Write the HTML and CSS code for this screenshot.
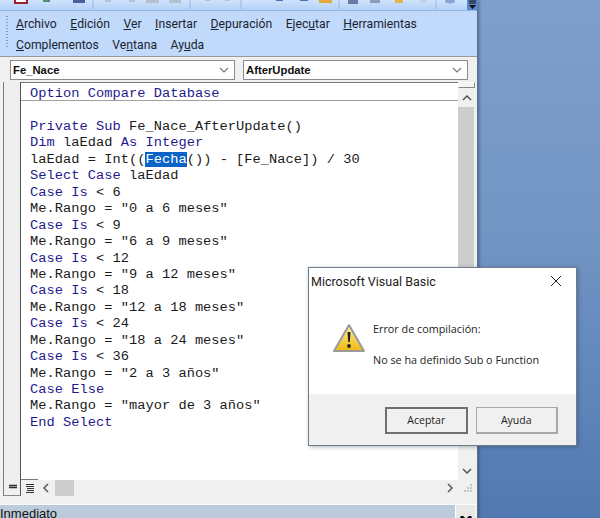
FILE: index.html
```html
<!DOCTYPE html>
<html lang="es">
<head>
<meta charset="utf-8">
<title>Microsoft Visual Basic</title>
<link rel="stylesheet" href="styles.css">
</head>
<body>
<div class="desktop">
  <div class="ide">
    <div class="toolbar">
      <svg class="tb-icons" width="478" height="10" viewBox="0 0 478 10">
        <rect x="15" y="-1" width="12" height="4" fill="#fff" stroke="#a02030" stroke-width="2"/>
        <path d="M43 0h7v2h-7z" fill="#4f8f72"/>
        <path d="M73 0h12v3H73z" fill="#4a5f9c"/>
        <path d="M93 0v9" stroke="#9db8dc"/>
        <path d="M105 0h6v2h-6zM129 0h6v2h-6zM146 0h13v3h-13zM169 0h12v3h-12z" fill="#b4c0d0"/>
        <path d="M190 0v9M241 0v9M339 0v9" stroke="#9db8dc"/>
        <path d="M205 0h5v1h-5zM225 0h5v1h-5z" fill="#b4c0d0"/>
        <path d="M276 0h7v1h-7zM300 0h8v1h-8z" fill="#5070b0"/>
        <path d="M319 0h13v3h-13z" fill="#e4a83c"/>
        <path d="M348 0h10v4h-10z" fill="#6a7aa6"/>
        <path d="M370 0h10v3h-10z" fill="#8d9bb8"/>
        <path d="M395 0h8v3h-8z" fill="#e8b64a"/>
        <path d="M420 0h7v2h-7z" fill="#c4cedd"/>
        <path d="M436 0v9" stroke="#9db8dc"/>
        <path d="M445 0h10v2c-3 2-7 2-10 0z" fill="#8aa6d8"/>
        <rect x="467" y="0" width="11" height="10" fill="#5b87c8"/>
        <path d="M469 1h7M469 3h7" stroke="#111"/>
        <path d="M469 5h7l-3.500 4z" fill="#111"/>
      </svg>
    </div>
    <nav class="menubar">
      <div class="grip"></div>
      <div class="menus">
        <div class="menu-row">
          <span class="menu"><u>A</u>rchivo</span>
          <span class="menu"><u>E</u>dición</span>
          <span class="menu"><u>V</u>er</span>
          <span class="menu"><u>I</u>nsertar</span>
          <span class="menu"><u>D</u>epuración</span>
          <span class="menu">Ejec<u>u</u>tar</span>
          <span class="menu"><u>H</u>erramientas</span>
        </div>
        <div class="menu-row">
          <span class="menu"><u>C</u>omplementos</span>
          <span class="menu">Ve<u>n</u>tana</span>
          <span class="menu">Ay<u>u</u>da</span>
        </div>
      </div>
    </nav>
    <div class="combos">
      <div class="combo combo-left"><span>Fe_Nace</span><svg class="chev" width="10" height="6" viewBox="0 0 10 6"><path d="M1 1l4 4 4-4" fill="none" stroke="#777" stroke-width="1.100"/></svg></div>
      <div class="combo combo-right"><span>AfterUpdate</span><svg class="chev" width="10" height="6" viewBox="0 0 10 6"><path d="M1 1l4 4 4-4" fill="none" stroke="#777" stroke-width="1.100"/></svg></div>
    </div>
    <div class="editor">
      <div class="gutter-wrap">
        <div class="gutter"></div>
        <div class="view-btns">
          <div class="view-btn"><svg width="10" height="7" viewBox="0 0 10 7"><path d="M1 1.500h8M1 3.500h8" stroke="#333" stroke-width="1.300"/></svg></div>
          <div class="view-btn view-on"><svg width="10" height="10" viewBox="0 0 10 10"><path d="M1 1.500h8M1 3.500h8M2 5.500h7M2 7.500h7M1 9.500h8" stroke="#333"/></svg></div>
        </div>
      </div>
      <div class="code-col">
        <div class="code-area">
          <div class="code-scroll">
            <div class="code-head"><span class="kw">Option Compare Database</span></div>
            <div class="code">
              <div class="line"><span class="kw">Private Sub</span> Fe_Nace_AfterUpdate()</div>
              <div class="line"><span class="kw">Dim</span> laEdad <span class="kw">As Integer</span></div>
              <div class="line">laEdad = Int((<span class="sel">Fecha</span>()) - [Fe_Nace]) / 30</div>
              <div class="line"><span class="kw">Select Case</span> laEdad</div>
              <div class="line"><span class="kw">Case Is</span> &lt; 6</div>
              <div class="line">Me.Rango = "0 a 6 meses"</div>
              <div class="line"><span class="kw">Case Is</span> &lt; 9</div>
              <div class="line">Me.Rango = "6 a 9 meses"</div>
              <div class="line"><span class="kw">Case Is</span> &lt; 12</div>
              <div class="line">Me.Rango = "9 a 12 meses"</div>
              <div class="line"><span class="kw">Case Is</span> &lt; 18</div>
              <div class="line">Me.Rango = "12 a 18 meses"</div>
              <div class="line"><span class="kw">Case Is</span> &lt; 24</div>
              <div class="line">Me.Rango = "18 a 24 meses"</div>
              <div class="line"><span class="kw">Case Is</span> &lt; 36</div>
              <div class="line">Me.Rango = "2 a 3 años"</div>
              <div class="line"><span class="kw">Case Else</span></div>
              <div class="line">Me.Rango = "mayor de 3 años"</div>
              <div class="line"><span class="kw">End Select</span></div>
            </div>
          </div>
          <div class="vscroll">
            <div class="split"></div>
            <svg class="arrow" width="10" height="6" viewBox="0 0 10 6"><path d="M1 5l4-4 4 4" fill="none" stroke="#555" stroke-width="1.500"/></svg>
            <div class="vthumb"></div>
            <div class="vspace"></div>
            <svg class="arrow" width="10" height="6" viewBox="0 0 10 6"><path d="M1 1l4 4 4-4" fill="none" stroke="#555" stroke-width="1.500"/></svg>
          </div>
        </div>
        <div class="hscroll">
          <svg width="6" height="10" viewBox="0 0 6 10"><path d="M5 1L1 5l4 4" fill="none" stroke="#555" stroke-width="1.500"/></svg>
          <div class="hthumb"></div>
          <div class="hspace"></div>
          <svg width="6" height="10" viewBox="0 0 6 10"><path d="M1 1l4 4-4 4" fill="none" stroke="#555" stroke-width="1.500"/></svg>
          <svg class="resize" width="10" height="10" viewBox="0 0 10 10"><path d="M7 1h2v2H7zM4 4h2v2H4zM7 4h2v2H7zM1 7h2v2H1zM4 7h2v2H4zM7 7h2v2H7z" fill="#c4c4c4"/></svg>
        </div>
      </div>
    </div>
    <div class="immediate">
      <span class="imm-title">Inmediato</span>
      <div class="imm-close"><svg width="14" height="10" viewBox="0 0 14 10"><path d="M2 0l10 10M12 0L2 10" stroke="#000" stroke-width="3"/></svg></div>
    </div>
  </div>
  <div class="dialog">
    <div class="dlg-title">
      <span>Microsoft Visual Basic</span>
      <svg width="12" height="12" viewBox="0 0 12 12"><path d="M1 1l10 10M11 1L1 11" stroke="#222" stroke-width="1"/></svg>
    </div>
    <div class="dlg-body">
      <svg class="warn" width="34" height="30" viewBox="0 0 34 30">
        <defs><linearGradient id="wg" x1="0" y1="0" x2="0" y2="1"><stop offset="0" stop-color="#fdf1a0"/><stop offset="1" stop-color="#f0b810"/></linearGradient></defs>
        <path d="M17 2L32 28H2z" fill="url(#wg)" stroke="#9a9a9a" stroke-width="2" stroke-linejoin="round"/>
        <path d="M15.500 9h3l-.7 10h-1.600z" fill="#222"/>
        <circle cx="17" cy="23" r="1.900" fill="#222"/>
      </svg>
      <div class="dlg-text">
        <p>Error de compilación:</p>
        <p>No se ha definido Sub o Function</p>
      </div>
    </div>
    <div class="dlg-foot">
      <div class="btn btn-default">Aceptar</div>
      <div class="btn">Ayuda</div>
    </div>
  </div>
</div>
</body>
</html>
```
FILE: styles.css
```css
* { box-sizing: border-box; }
html, body { margin: 0; padding: 0; }
body { width: 600px; height: 518px; overflow: hidden; font-family: "Liberation Sans", Arial, sans-serif; }

.desktop {
  position: relative;
  width: 600px;
  height: 518px;
  overflow: hidden;
  background: linear-gradient(180deg, #7f9fcb 0%, #7295c4 45%, #5179b1 100%);
}

.ide {
  width: 478px;
  height: 518px;
  display: flex;
  flex-direction: column;
  background: #f0f0f0;
  border-right: 1px solid #5d6f8a;
  box-shadow: 1px 0 3px rgba(30, 50, 80, .5);
}

.toolbar { height: 11px; background: linear-gradient(180deg, #cfe3fc, #b4d1f7); border-bottom: 1px solid #8fb4e6; }
.tb-icons { display: block; }

.menubar {
  height: 46px;
  display: flex;
  background: #c1dafc;
  border-bottom: 1px solid #9a9a9a;
}
.grip {
  width: 2px;
  margin: 5px 0 8px 6px;
  background: repeating-linear-gradient(180deg, #7f9cc8 0 1px, transparent 1px 3px);
}
.menus { display: flex; flex-direction: column; padding: 3px 0 0 8px; }
.menu-row { display: flex; height: 21px; align-items: center; gap: 13.500px; }
.menu { font: 12.200px/21px Roboto, "Liberation Sans", sans-serif; color: #1c2430; }

.combos { height: 25px; display: flex; gap: 8px; padding: 3px 0 0 10px; background: #f0f0f0; }
.combo {
  height: 20px;
  display: flex;
  align-items: center;
  justify-content: space-between;
  padding: 0 5px 0 2px;
  background: #fff;
  border: 1px solid #8b8b8b;
  font-size: 11.300px;
  font-weight: 700;
  color: #111;
}
.combo-left { width: 225px; }
.combo-right { width: 225px; }

.editor { flex: 1; min-height: 0; display: flex; padding: 0 2px 8px 3px; background: #f0f0f0; border-bottom: 1px solid #fafafa; }
.gutter-wrap { width: 18px; flex: none; display: flex; flex-direction: column; border-left: 1px solid #7d7d7d; border-right: 1px solid #555; border-bottom: 1px solid #888; }
.gutter { flex: 1; background: #eeeeee; }
.view-btns { height: 16px; display: flex; width: 36px; }
.view-btn { width: 17px; height: 16px; display: flex; align-items: center; justify-content: center; flex: none; }
.view-on { border-top: 1px solid #777; position: relative; z-index: 1; }

.code-col { flex: 1; min-width: 0; display: flex; flex-direction: column; }
.code-area { flex: 1; min-height: 0; display: flex; }
.code-scroll { flex: 1; min-width: 0; background: #fff; border-top: 1px solid #777; }
.code-head { height: 18px; padding-left: 9px; border-bottom: 1px solid #a0a0a0; font: 13.700px/22px "Liberation Mono", "Courier New", monospace; letter-spacing: .03px; }
.code { margin: 18px 0 0; padding-left: 9px; font: 13.700px/16.440px "Liberation Mono", "Courier New", monospace; letter-spacing: .03px; color: #1a1a1a; }
.line { height: 16.440px; white-space: pre; }
.kw { color: #1f1a8c; }
.sel { background: #0a64c8; color: #fff; }

.vscroll { width: 17px; flex: none; display: flex; flex-direction: column; align-items: center; background: #f0f0f0; }
.split { width: 17px; height: 6px; flex: none; background: #f4f4f4; border: 1px solid #888; border-top-color: #f8f8f8; border-left-color: #f8f8f8; }
.arrow { margin: 7px 0 6px; flex: none; }
.vthumb { width: 16px; height: 200px; flex: none; align-self: flex-start; background: #cdcdcd; }
.vspace { flex: 1; }

.hscroll { height: 16px; flex: none; display: flex; align-items: center; gap: 10px; padding: 0 2px 0 22px; background: #f0f0f0; }
.hthumb { width: 19px; height: 16px; background: #cdcdcd; margin-left: -4px; }
.hspace { flex: 1; }

.immediate { height: 13px; flex: none; display: flex; justify-content: space-between; overflow: hidden; background: #bccbdc; margin-right: 2px; }
.imm-title { font-size: 13px; line-height: 17px; color: #111; }
.imm-close { width: 20px; background: #e8e8e8; padding: 7px 0 0 3px; border-left: 1px solid #fff; }

.dialog {
  position: absolute;
  left: 308px;
  top: 267px;
  width: 269px;
  height: 179px;
  display: flex;
  flex-direction: column;
  background: #fff;
  border: 1px solid #6f7d8f;
  box-shadow: 1px 1px 4px rgba(30, 40, 60, .35);
  font-family: "Open Sans", "Liberation Sans", sans-serif;
  color: #222;
}
.dlg-title { height: 26px; flex: none; padding: 0 14px 0 2px; display: flex; align-items: center; justify-content: space-between; font: 12.500px Roboto, "Liberation Sans", sans-serif; }
.dlg-body { flex: 1; display: flex; padding: 27px 0 0 23px; gap: 7px; }
.warn { margin-top: 2px; flex: none; }
.dlg-text p { margin: 0 0 15px; font-size: 10.800px; line-height: 16px; }
.dlg-foot { height: 51px; flex: none; display: flex; gap: 8px; padding: 13px 18px 0 76px; background: #f0f0f0; }
.btn { width: 83px; height: 27px; background: #f0f0f0; border: 1px solid #a8a8a8; border-bottom-width: 2px; border-right-width: 2px; text-align: center; font-size: 10.500px; line-height: 24px; }
.btn-default { border: 2px solid #707070; line-height: 23px; }
```
